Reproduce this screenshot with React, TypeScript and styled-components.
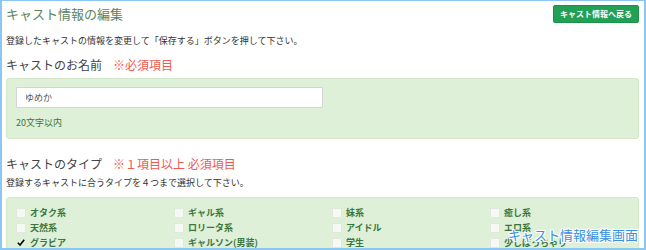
import React from "react";
import styled, { createGlobalStyle } from "styled-components";

const Global = createGlobalStyle`
  html, body { margin: 0; padding: 0; background: #fff; }
  body { font-family: "Noto Sans CJK JP", "Noto Sans", sans-serif; color: #333; }
  * { box-sizing: border-box; }
`;

const Frame = styled.div`
  position: relative;
  width: 646px;
  height: 250px;
  overflow: hidden;
  border: 2px solid #8cc7f3;
  border-top-width: 1px;
  background: #fff;
`;

const Content = styled.div`
  padding: 4px 5px 0 4px;
`;

const Header = styled.div`
  display: flex;
  justify-content: space-between;
  align-items: flex-start;
`;

const Title = styled.h1`
  margin: 0;
  font-size: 13px;
  line-height: 18px;
  font-weight: normal;
  color: #5b845e;
`;

const BackButton = styled.button`
  height: 18px;
  padding: 0 6px;
  border: 1px solid #1c9248;
  border-radius: 2px;
  background: #22a055;
  color: #fff;
  font-family: inherit;
  font-size: 8px;
  font-weight: bold;
  line-height: 16px;
  cursor: pointer;
`;

const Description = styled.p<{ $top: number }>`
  margin: ${(p) => p.$top}px 0 0 0;
  font-size: 9px;
  line-height: 14px;
  color: #333;
`;

const Heading = styled.h2<{ $top: number }>`
  margin: ${(p) => p.$top}px 0 0 0;
  font-size: 12px;
  line-height: 16px;
  font-weight: normal;
  color: #444;
  display: flex;
  gap: 11px;
`;

const Required = styled.span`
  color: #ef5a50;
`;

const Panel = styled.div<{ $top: number }>`
  margin-top: ${(p) => p.$top}px;
  background: #dff0d8;
  border: 1px solid #d3e7c8;
  border-radius: 3px;
`;

const NamePanel = styled(Panel)`
  padding: 8px 9px 8px 9px;
`;

const TextInput = styled.input`
  display: block;
  width: 307px;
  height: 21px;
  padding: 0 8px;
  border: 1px solid #d4d4d4;
  border-radius: 1px;
  background: #fff;
  font-family: inherit;
  font-size: 9px;
  color: #555;
  outline: none;
`;

const HelpText = styled.div`
  margin-top: 8px;
  font-size: 9px;
  line-height: 14px;
  color: #3c763d;
`;

const TypePanel = styled(Panel)`
  padding: 7px 9px 7px 9px;
  display: grid;
  grid-template-columns: repeat(4, 158px);
`;

const Option = styled.label`
  display: flex;
  align-items: center;
  gap: 4px;
  height: 15px;
  font-size: 9px;
  font-weight: bold;
  color: #3c763d;
`;

const Box = styled.span<{ $checked: boolean }>`
  width: 10px;
  height: 10px;
  flex: none;
  display: flex;
  align-items: center;
  justify-content: center;
  background: ${(p) => (p.$checked ? "transparent" : "#f5f8f3")};
  border: 1px solid ${(p) => (p.$checked ? "transparent" : "#e1e8dc")};
`;

const Caption = styled.div`
  position: absolute;
  right: 6px;
  bottom: 5px;
  font-size: 13px;
  line-height: 16px;
  color: #3a8fe0;
  font-family: "Noto Sans CJK JP", sans-serif;
  text-shadow:
    1px 0 0 #fff, -1px 0 0 #fff, 0 1px 0 #fff, 0 -1px 0 #fff,
    1px 1px 0 #fff, -1px -1px 0 #fff, 1px -1px 0 #fff, -1px 1px 0 #fff;
`;

const types: { label: string; checked?: boolean }[] = [
  { label: "オタク系" },
  { label: "ギャル系" },
  { label: "妹系" },
  { label: "癒し系" },
  { label: "天然系" },
  { label: "ロリータ系" },
  { label: "アイドル" },
  { label: "エロ系" },
  { label: "グラビア", checked: true },
  { label: "ギャルソン(男装)" },
  { label: "学生" },
  { label: "少しぽっちゃり" },
];

const Check = () => (
  <svg width="10" height="9" viewBox="0 0 10 9">
    <path d="M1 4.8 L3.8 7.6 L9 1.2" fill="none" stroke="#000" strokeWidth="2" />
  </svg>
);

export default function App() {
  return (
    <>
      <Global />
      <Frame>
        <Content>
          <Header>
            <Title>キャスト情報の編集</Title>
            <BackButton>キャスト情報へ戻る</BackButton>
          </Header>
          <Description $top={11}>
            登録したキャストの情報を変更して「保存する」ボタンを押して下さい。
          </Description>
          <Heading $top={9}>
            キャストのお名前<Required>※必須項目</Required>
          </Heading>
          <NamePanel $top={5}>
            <TextInput defaultValue="ゆめか" />
            <HelpText>20文字以内</HelpText>
          </NamePanel>
          <Heading $top={17}>
            キャストのタイプ<Required>※１項目以上 必須項目</Required>
          </Heading>
          <Description $top={4}>
            登録するキャストに合うタイプを４つまで選択して下さい。
          </Description>
          <TypePanel $top={7}>
            {types.map((t) => (
              <Option key={t.label}>
                <Box $checked={!!t.checked}>{t.checked && <Check />}</Box>
                {t.label}
              </Option>
            ))}
          </TypePanel>
        </Content>
        <Caption>キャスト情報編集画面</Caption>
      </Frame>
    </>
  );
}
